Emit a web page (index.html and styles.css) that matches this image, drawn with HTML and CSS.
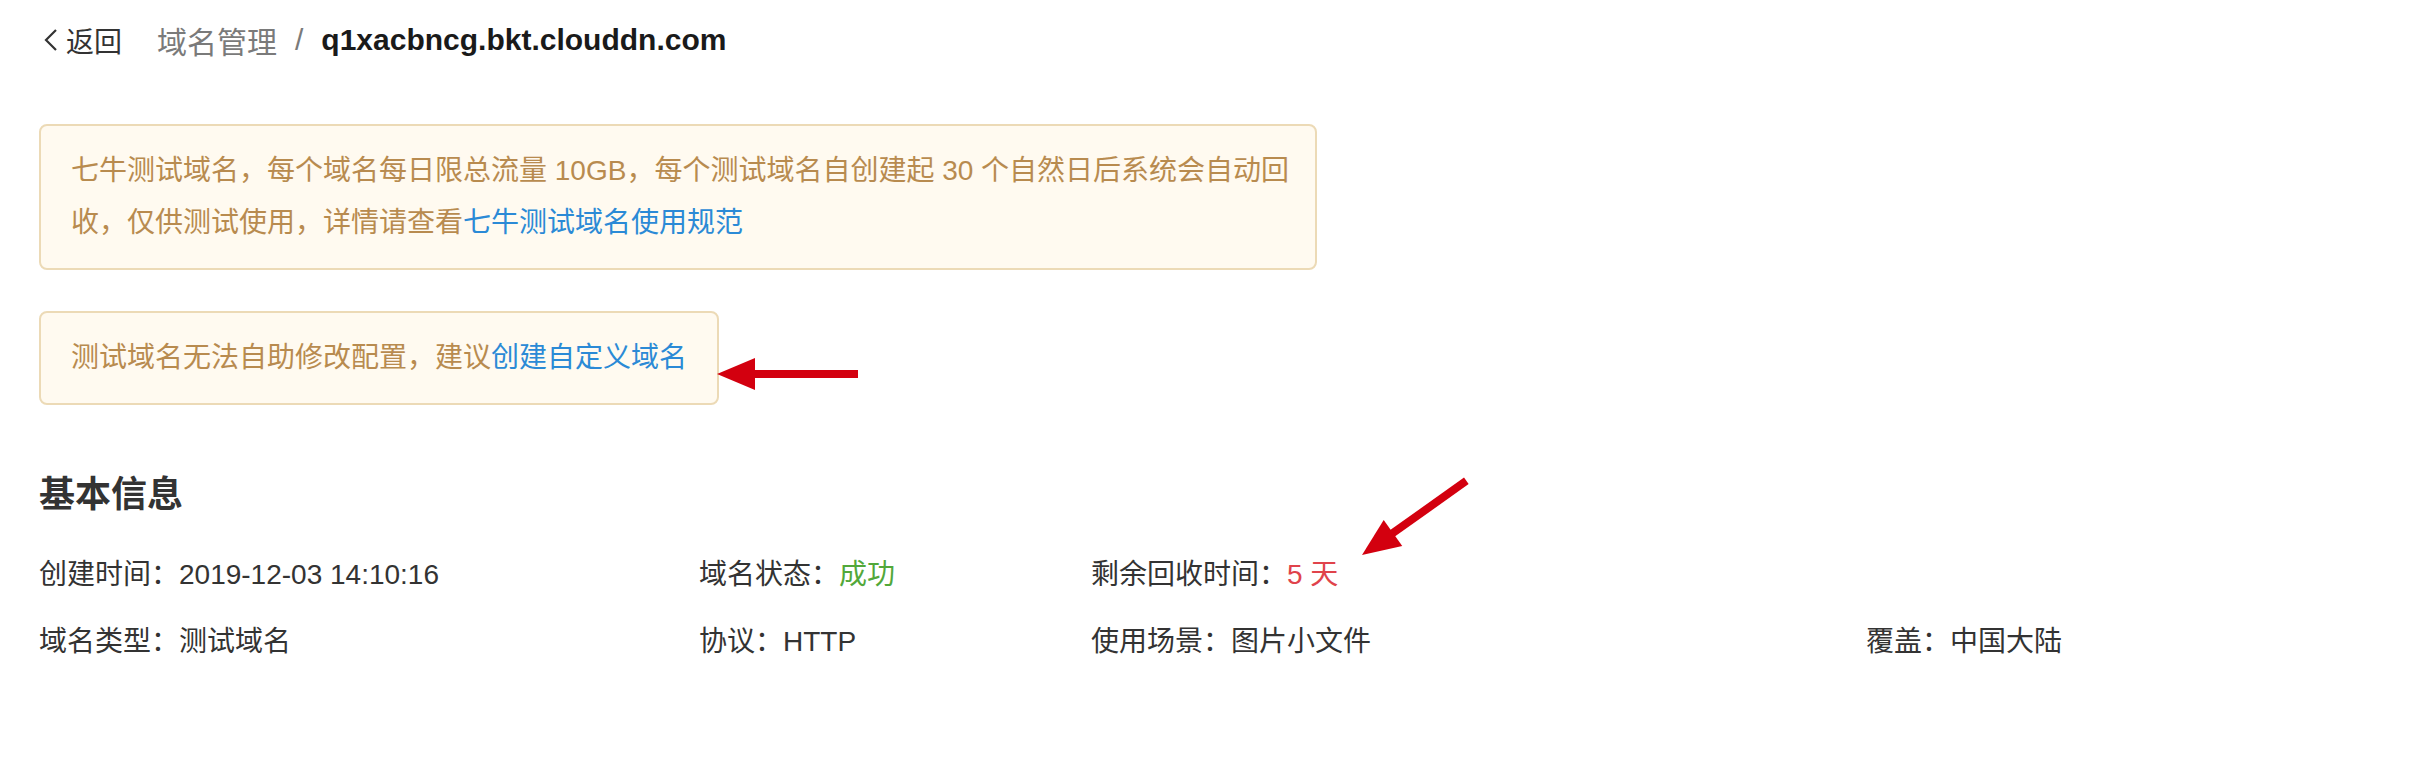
FILE: index.html
```html
<!DOCTYPE html>
<html lang="zh-CN">
<head>
  <meta charset="UTF-8">
  <title>域名管理 - q1xacbncg.bkt.clouddn.com</title>
  <link rel="stylesheet" href="styles.css">
</head>
<body>
  <div class="page">
    <div class="crumbs">
      <a class="back" href="#">
        <svg viewBox="0 0 16 22"><polyline points="13,1 3,11 13,21" fill="none" stroke="#333" stroke-width="2.2"/></svg>返回
      </a>
      <span class="crumb-parent">域名管理</span>
      <span class="crumb-sep">/</span>
      <span class="crumb-current">q1xacbncg.bkt.clouddn.com</span>
    </div>

    <div class="notice notice-wide">七牛测试域名，每个域名每日限总流量 10GB，每个测试域名自创建起 30 个自然日后系统会自动回收，仅供测试使用，详情请查看<a href="#">七牛测试域名使用规范</a></div>

    <div class="notice">测试域名无法自助修改配置，建议<a href="#">创建自定义域名</a></div>

    <h2 class="section-title">基本信息</h2>
    <div class="info-grid">
      <div>创建时间：2019-12-03 14:10:16</div>
      <div>域名状态：<span class="ok">成功</span></div>
      <div>剩余回收时间：<span class="warn">5 天</span></div>
      <div></div>
      <div>域名类型：测试域名</div>
      <div>协议：HTTP</div>
      <div>使用场景：图片小文件</div>
      <div>覆盖：中国大陆</div>
    </div>

    <!-- annotation arrows drawn over the page -->
    <svg class="marks" viewBox="0 0 2424 764">
      <g transform="translate(717,374)" fill="#d3000f">
        <polygon points="0,0 38,-16 38,16"/>
        <rect x="34" y="-4" width="107" height="8"/>
      </g>
      <g transform="translate(1362,555) rotate(-35.4)" fill="#d3000f">
        <polygon points="0,0 38,-16 38,16"/>
        <rect x="34" y="-4" width="94" height="8"/>
      </g>
    </svg>
  </div>
</body>
</html>
```

FILE: styles.css
```css
body {
  margin: 0;
  font-family: "Liberation Sans", "Noto Sans CJK SC", sans-serif;
  color: #333;
  background: #fff;
}
.page {
  position: relative;
  display: flex;
  flex-direction: column;
  align-items: flex-start;
  padding: 0 39px;
  height: 764px;
  box-sizing: border-box;
}
.crumbs {
  display: flex;
  align-items: center;
  height: 80px;
  font-size: 28px;
}
.back {
  display: flex;
  align-items: center;
  margin-left: 4px;
  color: #333;
  text-decoration: none;
}
.back svg {
  width: 16px;
  height: 22px;
  margin-right: 7px;
}
.crumb-parent {
  margin-left: 35px;
  font-size: 30px;
  color: #7a7a7a;
}
.crumb-sep {
  margin: 0 18px;
  font-size: 30px;
  color: #7a7a7a;
}
.crumb-current {
  font-size: 30px;
  font-weight: 700;
  color: #1a1a1a;
}
.notice {
  margin-top: 44px;
  padding: 19px 30px;
  border: 2px solid #ecdab6;
  border-radius: 8px;
  background: #fffaf0;
  color: #b88b4f;
  font-size: 28px;
  line-height: 52px;
}
.notice + .notice {
  margin-top: 41px;
}
.notice-wide {
  width: 1278px;
  box-sizing: border-box;
  padding-right: 20px;
}
.notice a {
  color: #2b8ad6;
  text-decoration: none;
}
.section-title {
  margin: 65px 0 0;
  font-size: 36px;
  line-height: 50px;
  font-weight: 600;
  color: #333;
}
.info-grid {
  margin-top: 29px;
  display: grid;
  grid-template-columns: 660px 392px 775px auto;
  row-gap: 15px;
  font-size: 28px;
  line-height: 52px;
}
.ok {
  color: #52a83a;
}
.warn {
  color: #e0434b;
}
.marks {
  position: absolute;
  top: 0;
  left: 0;
  width: 2424px;
  height: 764px;
  pointer-events: none;
}
```
